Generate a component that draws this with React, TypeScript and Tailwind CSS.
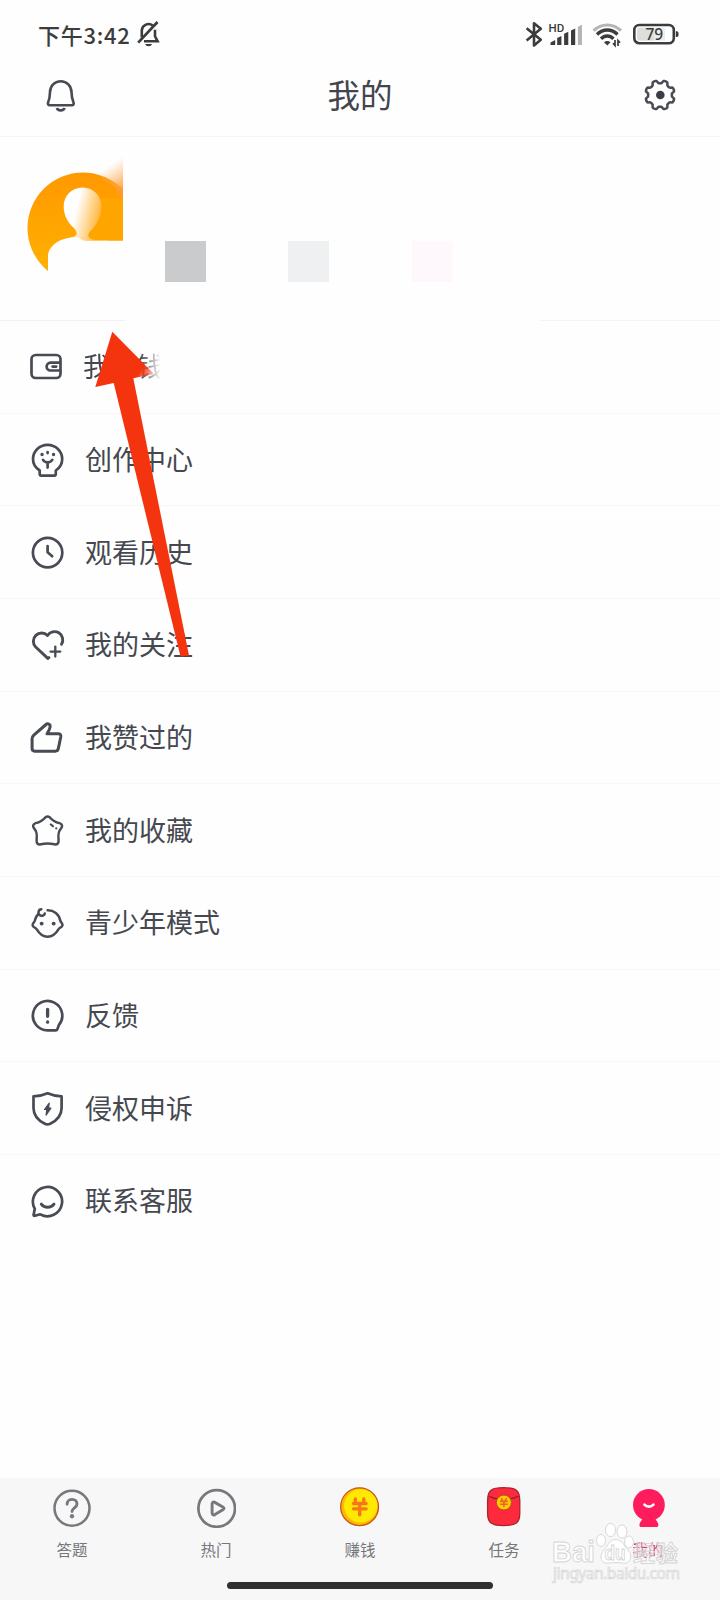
import { ReactNode } from 'react';

type MenuItem = {
  label: string;
  icon: ReactNode;
  faded?: boolean;
};

// Outline of the settings gear: a circle with eight soft teeth
const gearPath = (() => {
  const points: string[] = [];
  for (let i = 0; i < 144; i++) {
    const angle = (i / 144) * Math.PI * 2;
    const wave = Math.tanh(-2.2 * Math.cos(angle * 8));
    const radius = 13.3 + 1.5 * wave;
    points.push(`${(18 + radius * Math.cos(angle)).toFixed(2)} ${(18 + radius * Math.sin(angle)).toFixed(2)}`);
  }
  return `M${points.join('L')}Z`;
})();

function LineIcon({ children }: { children: ReactNode }) {
  return (
    <svg
      viewBox="0 0 36 36"
      className="h-9 w-9 shrink-0"
      fill="none"
      stroke="#484b54"
      strokeWidth="2.7"
      strokeLinecap="round"
      strokeLinejoin="round"
    >
      {children}
    </svg>
  );
}

const menuItems: MenuItem[] = [
  {
    label: '我的钱',
    faded: true,
    icon: (
      <LineIcon>
        <rect x="2.500" y="6" width="29" height="23" rx="4.200" />
        <path d="M31 13.700H21.500a3.900 3.900 0 0 0 0 7.800H31" />
        <path d="M23.600 17.600h3.600" />
      </LineIcon>
    ),
  },
  {
    label: '创作中心',
    icon: (
      <LineIcon>
        <path d="M10.700 29.500v3.200c0 1.300.7 2 2 2h12.100c1.300 0 2-.7 2-2v-3.200c3.900-2.600 6.400-6.500 6.400-11.500a14.600 14.100 0 1 0-29.200 0c0 5 2.700 8.900 6.700 11.500Z" />
        <path d="M14 18.900c1.200 1.900 2.700 2.500 4.600 2.500s3.500-.6 4.700-2.500M18.600 21.500v5.100M18.600 11v1.100" />
        <path d="M13 13.500h.1M24.500 13.500h.1" strokeWidth="3.300" />
      </LineIcon>
    ),
  },
  {
    label: '观看历史',
    icon: (
      <LineIcon>
        <circle cx="18.600" cy="18.600" r="14.700" />
        <path d="M18.600 12v6.200l4.600 4" />
      </LineIcon>
    ),
  },
  {
    label: '我的关注',
    icon: (
      <LineIcon>
        <path d="M18.800 31.400 6.700 20a8.200 8.200 0 0 1 11.800-11.500 8.200 8.200 0 0 1 14 8.700M18.800 31.400l1.100-.8" strokeWidth="2.900" />
        <path d="M26.300 19.600v10M21.500 24.600h9.800" strokeWidth="2.300" />
      </LineIcon>
    ),
  },
  {
    label: '我赞过的',
    icon: (
      <LineIcon>
        <path
          d="M5.700 32.200c-1.700 0-2.600-.9-2.600-2.600v-9.800c0-1.500.6-2.700 1.700-3.700L17 5.500c1.700-1.500 4.500-.2 4.200 2.100-.3 2.200-1.400 4.500-3.200 7.200h11.200c1.900 0 2.900 1.200 2.600 2.900l-2.500 11.900c-.3 1.700-1.300 2.600-3 2.600Z"
          strokeWidth="3"
        />
      </LineIcon>
    ),
  },
  {
    label: '我的收藏',
    icon: (
      <LineIcon>
        <path
          d="M16.500 5.200c1.400-1 2.800-1 4.200 0 2.500 3 5 4.900 9.800 5.900 2.700.9 3.400 3.200 1.600 5.200-2.700 3-3.200 5.500-2.500 12 .2 3.300-1.500 4.600-4.200 4-4.500-.9-9.100-.9-13.600 0-2.700.6-4.400-.7-4.200-4 .7-6.500.2-9-2.500-12-1.800-2-1.100-4.300 1.600-5.200 4.800-1 7.300-2.900 9.800-5.900Z"
          strokeWidth="2.500"
        />
        <path d="m21.800 12.500 2.100 1.700M27.200 16.300h.1" strokeWidth="2.200" />
      </LineIcon>
    ),
  },
  {
    label: '青少年模式',
    icon: (
      <LineIcon>
        <path
          d="M9.300 9C7.700 10.500 6.500 12.600 6 15.100c-.2 1.300-.8 1.900-1.500 2.700-1.600 2-.9 3.700.9 4.500 1 .4 1.600 1 2.200 1.900 2.700 4.600 6.500 7.600 11 7.600s8.300-3 11-7.600c.5-.9 1.100-1.500 2.100-1.900 1.900-.8 2.500-2.500.9-4.500-.7-.8-1.200-1.400-1.500-2.700-1-5.900-6.200-10-12.500-9.900"
          strokeWidth="2.500"
        />
        <path d="M12.300 4.300c-3.200.3-4 5.100-.8 6.200 2.100.8 4.200-.4 4.300-2.100" strokeWidth="2.500" />
        <path d="M12.600 18.600h.1M24.600 18.600h.1" strokeWidth="3.900" />
      </LineIcon>
    ),
  },
  {
    label: '反馈',
    icon: (
      <LineIcon>
        <path d="M18.500 33.400a14.700 14.700 0 1 1 11.300-5.200l-1.400 3.900c-.3.800-.8 1.300-1.700 1.300Z" />
        <path d="M18.600 12.300v7M18.600 25v.2" strokeWidth="3.300" />
      </LineIcon>
    ),
  },
  {
    label: '侵权申诉',
    icon: (
      <LineIcon>
        <path d="M18.600 3.300c4.300 1.900 8.800 3 14 3.100v11.500c0 7.500-4.100 12.200-11.400 15.800-2 1-3.400 1-5.400 0C8.700 30.100 4.500 25.400 4.500 17.900V6.400c5.300-.1 9.800-1.200 14.100-3.100Z" />
        <path d="m20.200 13.200-4.700 6.300h2.300l-.7 5.600 4.800-6.900h-2.300Z" fill="#484b54" strokeWidth="1.200" />
      </LineIcon>
    ),
  },
  {
    label: '联系客服',
    icon: (
      <LineIcon>
        <path d="M5.800 25.800a14.600 14.600 0 1 1 5.500 5.500l-5.400 1.500c-1 .2-1.500-.3-1.200-1.300Z" />
        <path d="M12.300 21.100c3.100 4.200 9.500 4.200 12.700 0" strokeWidth="2.900" />
      </LineIcon>
    ),
  },
];

const tabs = [
  {
    label: '答题',
    icon: (
      <svg viewBox="0 0 40 40" className="h-10 w-10" fill="none" stroke="#76787d" strokeLinecap="round">
        <circle cx="20" cy="20.300" r="17.500" strokeWidth="2.500" />
        <path d="M15.100 16.300c0-3 2-4.900 4.900-4.900s5 1.800 5 4.500c0 3.900-5 4.100-5 7.700" strokeWidth="2.900" />
        <path d="M20 28.200v.1" strokeWidth="4.200" />
      </svg>
    ),
  },
  {
    label: '热门',
    icon: (
      <svg viewBox="0 0 40 40" className="h-10 w-10" fill="none" stroke="#76787d" strokeLinejoin="round">
        <circle cx="20.700" cy="20.500" r="18.300" strokeWidth="2.700" />
        <path
          d="M16.100 16c0-1.800 1.200-2.400 2.700-1.600l8.100 4.500c1.500.8 1.500 2.100 0 2.900l-8 4.800c-1.500.8-2.800.2-2.800-1.600Z"
          strokeWidth="2.900"
        />
      </svg>
    ),
  },
  {
    label: '赚钱',
    icon: (
      <svg viewBox="0 0 40 40" className="h-10 w-10 overflow-visible">
        <circle cx="19.600" cy="18.700" r="18.900" fill="#fdb900" stroke="#c9541b" strokeWidth="1.300" />
        <circle cx="20.700" cy="17.900" r="16.600" fill="#ffe900" />
        <path d="M15.300 10.800v2.400M23.800 10.800v2.400M13.500 15.500h12.600M13.500 20.800h12.600M19.700 15.500v11.400" fill="none" stroke="#f7761b" strokeWidth="3.300" strokeLinecap="round" />
      </svg>
    ),
  },
  {
    label: '任务',
    icon: (
      <svg viewBox="0 0 40 40" className="h-10 w-10 overflow-visible">
        <path
          d="M19.700-.3C32-.3 35.800 2 35.800 13v12c0 10-3.800 12.600-16.100 12.600S3.600 35 3.600 25V13C3.600 2 7.400-.3 19.700-.3Z"
          fill="#fc2a3c"
          stroke="#a8242e"
          strokeWidth="1.300"
        />
        <path d="M5 8.300c8.400 4.200 21 4.200 29.400 0" fill="none" stroke="#8f2029" strokeWidth="1.200" />
        <circle cx="19.900" cy="14.500" r="7.500" fill="#ffca08" stroke="#b75016" strokeWidth="1" />
        <path
          d="m17.600 10.800.8 1.500M22.200 10.800l-.8 1.500M16.600 13.400h6.600M16.600 16.200h6.600M19.900 13.400v5"
          fill="none"
          stroke="#ef6224"
          strokeWidth="1.600"
          strokeLinecap="round"
        />
      </svg>
    ),
  },
  {
    label: '我的',
    active: true,
    icon: (
      <svg viewBox="0 0 40 40" className="h-10 w-10" fill="#ff1c5c">
        <circle cx="20.900" cy="16.900" r="15.900" />
        <path d="M15 29h11.800c.4 2.300 1.800 3.800 3 5.700 1.200 2.300.6 4.300-1.500 4.300H13.500c-2.100 0-2.700-2-1.500-4.300 1.200-1.900 2.600-3.400 3-5.700Z" />
        <path d="M16.500 16.600c2.300 2.700 6.600 2.700 8.900 0" fill="none" stroke="#fff" strokeWidth="2.600" strokeLinecap="round" />
      </svg>
    ),
  },
];

function StatusBar() {
  return (
    <div className="flex h-[60px] items-center justify-between pt-2 pr-[41px] pl-[38px] text-[#3c3c3c]">
      <div className="flex items-center">
        <span className="w-[97px] text-[22px] leading-none font-medium tracking-[0.7px] whitespace-nowrap">下午3:42</span>
        <svg viewBox="0 0 26 28" className="h-7 w-[26px]" fill="none" stroke="#3c3c3c" strokeWidth="2.600">
          <path d="M6.800 17.500V10.200a6.800 6.800 0 0 1 11-4.700M20 9.800v6.500l2.600 5H9" />
          <path d="M22.500 2 3.200 22.600" strokeWidth="2.700" />
          <path d="M10.200 24h6.800c-.6 1.700-1.700 2.200-3.400 2.200s-2.900-.5-3.400-2.200Z" fill="#3c3c3c" stroke="none" />
        </svg>
      </div>
      <div className="flex items-center">
        <svg viewBox="0 0 18 28" className="mr-[6px] h-7 w-[18px]" fill="none" stroke="#3c3c3c" strokeWidth="2.600" strokeLinejoin="round">
          <path d="m1.600 8.200 14.200 11.600-6.800 5.600V3.200l6.800 5.600L1.600 20.400" />
        </svg>
        <svg viewBox="0 0 34 28" className="mr-[9px] h-7 w-[34px]">
          <text x="-.5" y="11.800" fontSize="11.500" fontWeight="500" fontFamily="Roboto, sans-serif" fill="#3c3c3c">
            HD
          </text>
          <path d="M1.500 25v-2.500l4.700-2.500v5ZM8.200 25v-7l4.200-2v9ZM15.100 25V13.700l4.200-1.900V25ZM22 25V10.400l4.200-2V25Z" fill="#3c3c3c" />
          <path d="M28.900 25V6.800l4.100-2.100V25Z" fill="#b5b5b5" />
        </svg>
        <svg viewBox="0 0 32 28" className="mr-[9px] h-7 w-8" fill="none" strokeWidth="3">
          <path d="M1.500 10.700c8-7.500 19.500-7.500 27.500 0" stroke="#b5b5b5" />
          <path d="M5 14.500c6-6 14.700-6 20.500 0M9 18.800c3.700-3.800 8.800-3.800 12.500 0" stroke="#3c3c3c" strokeWidth="3.400" />
          <path d="M12 22.300c2-1.700 4.500-1.700 6.500 0l-3.200 3.300Z" fill="#3c3c3c" />
          <path d="M23 20v5.500l-2-2.300M26 26v-5.500l2 2.300" stroke="#3c3c3c" strokeWidth="1.700" />
        </svg>
        <svg viewBox="0 0 46 28" className="h-7 w-[46px]">
          <rect x="1.300" y="5" width="39.500" height="18.200" rx="5" fill="#fff" stroke="#3c3c3c" strokeWidth="2.600" />
          <path d="M6.500 7.500H21v13.200H6.500a2.500 2.500 0 0 1-2.500-2.500V10a2.500 2.500 0 0 1 2.500-2.500Z" fill="#dedede" />
          <path d="M21 7.500h11v13.200H21Z" fill="#ededed" />
          <path d="M42.800 11.300h1a1.700 1.700 0 0 1 1.700 1.700v2.200a1.700 1.700 0 0 1-1.700 1.700h-1Z" fill="#3c3c3c" />
          <text x="21.300" y="19.700" fontSize="15.500" fontWeight="500" textAnchor="middle" fontFamily="'Noto Sans', sans-serif" fill="#3c3c3c">
            79
          </text>
        </svg>
      </div>
    </div>
  );
}

function Header() {
  return (
    <header className="flex h-[77px] items-center justify-between border-b border-[#f6f6f6] px-[42px] pb-[7px]">
      <svg viewBox="0 0 36 36" className="h-9 w-9" fill="none" stroke="#484b54" strokeWidth="2.600" strokeLinejoin="round">
        <path d="M18.700 4.300c6.200 0 10.600 4.700 10.800 10.800.1 4.200.5 6.900 2 10.400.6 1.700 0 2.700-1.800 2.700H8c-1.800 0-2.500-1-1.900-2.700 1.600-3.500 1.800-6.200 1.900-10.400C8.200 9 12.500 4.300 18.700 4.300Z" />
        <path d="M15 31c.8 3.200 6.600 3.200 7.400 0" strokeWidth="2.900" />
      </svg>
      <h1 className="text-[32.5px] leading-none text-[#42454d]">我的</h1>
      <svg viewBox="0 0 36 36" className="h-9 w-9" fill="none" stroke="#484b54" strokeWidth="2.500">
        <path d={gearPath} />
        <circle cx="18.300" cy="18" r="4.300" fill="#3a3d46" stroke="none" />
      </svg>
    </header>
  );
}

function Avatar() {
  return (
    <svg viewBox="0 0 100 130" className="h-[130px] w-[100px] shrink-0">
      <defs>
        <linearGradient id="disc" x1="0" y1="0" x2="0" y2="1">
          <stop offset="0" stopColor="#ff9800" />
          <stop offset="1" stopColor="#ffb400" />
        </linearGradient>
        <linearGradient id="head" gradientUnits="userSpaceOnUse" x1="52" y1="50" x2="78" y2="56">
          <stop offset="0" stopColor="#fff" />
          <stop offset="0.85" stopColor="#ffbd4d" />
          <stop offset="1" stopColor="#ffab1a" />
        </linearGradient>
        <linearGradient id="smear" gradientUnits="userSpaceOnUse" x1="82" y1="12" x2="98" y2="36">
          <stop offset="0" stopColor="#ffb066" stopOpacity="0" />
          <stop offset="1" stopColor="#ff9a2c" />
        </linearGradient>
        <clipPath id="cut">
          <path d="M0 0H98V85.500H60V130H0Z" />
        </clipPath>
      </defs>
      <g clipPath="url(#cut)">
        <circle cx="58" cy="73" r="55.500" fill="url(#disc)" />
        <path d="M70 19 98 2V46L90 32Z" fill="url(#smear)" />
        <path d="M76 44H98V86H60Z" fill="#ffa500" />
        <path
          d="M57.500 32.500C46.500 32.500 38.700 41 38.700 51.500c0 9 4.300 16.500 10.200 21.500 4.500 5 3.500 8.500-3.400 9.800V86H76C66 84.500 62 83 63.500 79c1-3 4.500-5 7-9C74.500 64.500 76.500 58 76.500 51.500 76.500 41 68.500 32.500 57.500 32.500Z"
          fill="url(#head)"
        />
        <path d="M46 82.500C31 84.500 23 93 23 101v28h60V85.500H58L52 82Z" fill="#fefefe" />
      </g>
    </svg>
  );
}

function Profile() {
  return (
    <section className="flex h-[183px] items-start pt-[18px] pl-[25px]">
      <Avatar />
      <div className="mt-[86px] ml-[40px] flex">
        <div className="h-[41px] w-[41px] bg-[#c9cbcc]" />
        <div className="ml-[82px] h-[41px] w-[41px] bg-[#eef0f2]" />
        <div className="ml-[83px] h-[41px] w-[41px] bg-[#fef7fb]" />
      </div>
    </section>
  );
}

function MenuRow({ item }: { item: MenuItem }) {
  return (
    <li className="flex h-[92.67px] flex-col">
      {item.faded ? (
        <div className="flex h-px justify-between">
          <div className="w-[125px] bg-[#f1f1f1]" />
          <div className="w-[180px] bg-[#f5f5f5]" />
        </div>
      ) : (
        <div className="h-px bg-[#f7f7f7]" />
      )}
      <div className="flex flex-1 items-center pl-[29px]">
        {item.icon}
        {item.faded ? (
          <span className="mb-[2px] ml-[18px] bg-gradient-to-r from-[#45484f] from-70% to-white to-96% bg-clip-text text-[27px] leading-none text-transparent">
            {item.label}
          </span>
        ) : (
          <span className="mb-[2px] ml-5 text-[27px] leading-none text-[#45484f]">{item.label}</span>
        )}
      </div>
    </li>
  );
}

function Watermark() {
  return (
    <svg
      viewBox="0 0 132 64"
      className="pointer-events-none absolute top-[1520px] left-[551px] h-16 w-[132px]"
      fill="#fff"
      fillOpacity="0.9"
      stroke="#d4d4d4"
      strokeWidth="0.9"
      fontFamily="'Liberation Sans', 'Noto Sans CJK SC', sans-serif"
    >
      <text x="1" y="41.500" fontSize="29" fontWeight="700" textLength="43" lengthAdjust="spacingAndGlyphs">
        Bai
      </text>
      <ellipse cx="50" cy="20.500" rx="4.500" ry="6" />
      <ellipse cx="59.500" cy="10" rx="5" ry="6.600" />
      <ellipse cx="71" cy="11.500" rx="5" ry="6.600" />
      <ellipse cx="78" cy="22" rx="4.500" ry="6" />
      <path d="M64 19.500c5 0 8 3.500 10.500 7.500 3.500 4 6 7 5 11-1 5-5 5.500-8 5-4-.6-9-.6-13 0-4 .6-8-.5-8.500-5-.5-4 2-7 5-10.500 2.500-3.500 4.500-8 9-8Z" />
      <text x="53.500" y="40" fontSize="20" fontWeight="700" textLength="21" lengthAdjust="spacingAndGlyphs">
        du
      </text>
      <text x="82" y="40.500" fontSize="22" fontWeight="700" textLength="45" fillOpacity="0.5">
        经验
      </text>
      <text x="2" y="58.500" fontSize="15.500" textLength="127" strokeWidth="0.7" fontFamily="'Noto Sans', sans-serif">
        jingyan.baidu.com
      </text>
    </svg>
  );
}

export default function App() {
  return (
    <div className="relative flex h-[1600px] w-[720px] flex-col overflow-hidden bg-[#fefefe] font-['Noto_Sans_CJK_SC',sans-serif]">
      <StatusBar />
      <Header />
      <Profile />
      <ul className="flex-1">
        {menuItems.map((item) => (
          <MenuRow key={item.label} item={item} />
        ))}
      </ul>

      <nav className="flex h-[122px] flex-col items-center bg-[#f7f7f7]">
        <div className="grid h-[104px] w-full grid-cols-5">
          {tabs.map((tab) => (
            <div key={tab.label} className="flex flex-col items-center pt-[10px]">
              {tab.icon}
              <span
                className={`mt-[14px] text-[15.5px] leading-none ${tab.active ? 'text-[#d9346b]' : 'text-[#75777b]'}`}
              >
                {tab.label}
              </span>
            </div>
          ))}
        </div>
        <div className="h-[7px] w-[266px] rounded-full bg-[#303030]" />
      </nav>

      {/* Pointer drawn over the list, aimed at the avatar */}
      <svg viewBox="0 0 104 334" className="pointer-events-none absolute top-[328px] left-[90px] h-[334px] w-[104px]">
        <defs>
          <linearGradient id="arrow" gradientUnits="userSpaceOnUse" x1="46" y1="36" x2="66" y2="48">
            <stop offset="0.3" stopColor="#f4330f" />
            <stop offset="1" stopColor="#f4330f" stopOpacity="0.15" />
          </linearGradient>
        </defs>
        <path d="M22.300 3.700 64 46 43.300 50.300 23.700 55 5.300 59Z" fill="url(#arrow)" />
        <path d="M23 48 42 46 43.300 50.300 99 327.500 90.500 328.500 23.700 55Z" fill="#f4330f" />
      </svg>

      <Watermark />
    </div>
  );
}
